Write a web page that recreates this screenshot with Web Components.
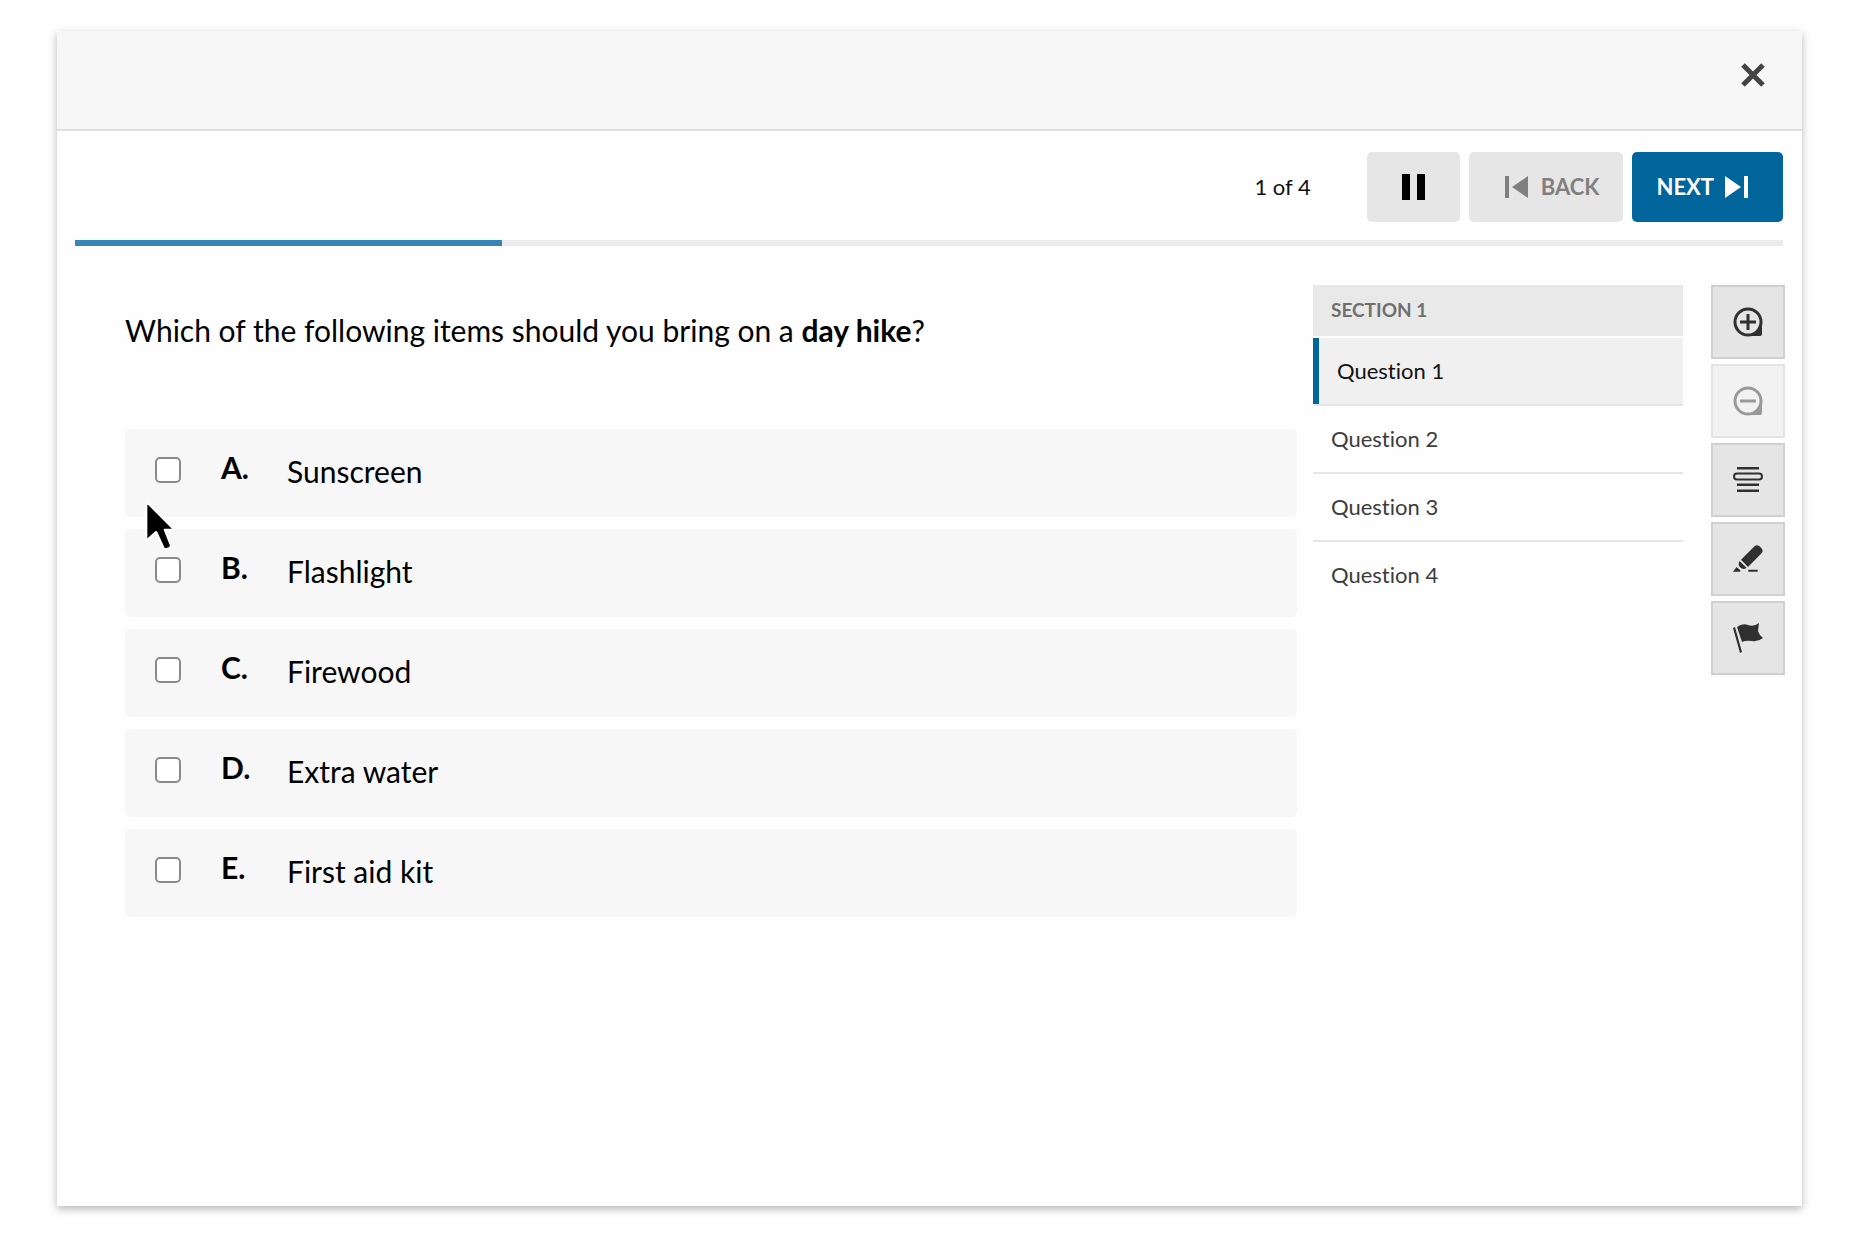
<!DOCTYPE html>
<html lang="en">
<head>
<meta charset="utf-8">
<meta name="viewport" content="width=device-width, initial-scale=1">
<title>Assessment</title>
<style>
  body {
    margin: 0;
    background: #fefefe;
    color: #111;
    font-family: Lato, "Liberation Sans", sans-serif;
    font-size: 22px;
    font-variant-ligatures: none;
  }
</style>
</head>
<body>
<quiz-window>
  <quiz-toolbar slot="toolbar" current="1" total="4"></quiz-toolbar>
  <quiz-progress slot="toolbar" value="1" max="4"></quiz-progress>
  <quiz-question slot="question">
    <span slot="prompt">Which of the following items should you bring on a <strong>day hike</strong>?</span>
    <quiz-option letter="A">Sunscreen</quiz-option>
    <quiz-option letter="B">Flashlight</quiz-option>
    <quiz-option letter="C">Firewood</quiz-option>
    <quiz-option letter="D">Extra water</quiz-option>
    <quiz-option letter="E">First aid kit</quiz-option>
  </quiz-question>
  <quiz-nav slot="nav" heading="Section 1">
    <quiz-nav-item current>Question 1</quiz-nav-item>
    <quiz-nav-item>Question 2</quiz-nav-item>
    <quiz-nav-item>Question 3</quiz-nav-item>
    <quiz-nav-item>Question 4</quiz-nav-item>
  </quiz-nav>
  <quiz-tools slot="tools"></quiz-tools>
  <mouse-pointer slot="overlay"></mouse-pointer>
</quiz-window>

<script>
// Attaches an open shadow root and fills it
function fill(element, html) {
  element.attachShadow({ mode: "open" }).innerHTML = html;
}

class QuizWindow extends HTMLElement {
  constructor() {
    super();
    fill(this, `
      <style>
        :host {
          display: block;
          position: relative;
          box-sizing: border-box;
          min-height: calc(100vh - 61px);
          margin: 31px 50px 30px 57px;
          background: #fefefe;
          box-shadow: 0 3px 8px rgba(0, 0, 0, 0.28);
        }
        header {
          display: flex;
          align-items: center;
          justify-content: flex-end;
          box-sizing: border-box;
          height: 100px;
          padding: 0 33px 10px;
          background: #f7f7f7;
          border-bottom: 2px solid #dedfe0;
        }
        header button {
          display: flex;
          padding: 4px;
          border: 0;
          background: none;
        }
        .body {
          display: grid;
          grid-template-columns: 1fr 398px 74px;
          align-items: start;
          padding: 39px 17px 39px 68px;
        }
        slot[name="question"]::slotted(*) { margin-right: 16px; }
        slot[name="nav"]::slotted(*) { margin-right: 28px; }
      </style>
      <header>
        <button type="button" aria-label="Close">
          <svg width="24" height="24" viewBox="0 0 24 24" stroke="#444" stroke-width="5">
            <path d="M2 2L22 22M22 2L2 22"/>
          </svg>
        </button>
      </header>
      <slot name="toolbar"></slot>
      <div class="body">
        <slot name="question"></slot>
        <slot name="nav"></slot>
        <slot name="tools"></slot>
      </div>
      <slot name="overlay"></slot>
    `);
  }
}

class QuizToolbar extends HTMLElement {
  constructor() {
    super();
    fill(this, `
      <style>
        :host {
          display: flex;
          align-items: center;
          justify-content: flex-end;
          gap: 9px;
          padding: 21px 19px 18px;
        }
        .count { margin-right: 47px; }
        span { padding-bottom: 2px; }
        button {
          display: flex;
          align-items: center;
          gap: 10px;
          height: 70px;
          padding: 0 24px;
          border: 0;
          border-radius: 5px;
          background: #e6e6e6;
          color: #000;
          font: 700 22px Lato, "Liberation Sans", sans-serif;
          text-transform: uppercase;
        }
        .pause { padding: 0 34px; }
        .back { padding-left: 36px; color: #808080; }
        .next { padding-right: 35px; background: #00659b; color: #fff; }
        svg { fill: currentColor; }
      </style>
      <span class="count">${this.getAttribute("current")} of ${this.getAttribute("total")}</span>
      <button type="button" class="pause" aria-label="Pause">
        <svg width="25" height="26" viewBox="0 0 25 26"><path d="M1 0h8v26H1zM16 0h8v26h-8z"/></svg>
      </button>
      <button type="button" class="back" disabled>
        <svg width="26" height="24" viewBox="0 0 26 24"><path d="M0 1h4v22H0zM23 1v22L7 12z"/></svg>
        <span>Back</span>
      </button>
      <button type="button" class="next">
        <span>Next</span>
        <svg width="24" height="24" viewBox="0 0 24 24"><path d="M20 1h4v22h-4zM1 1v22L17 12z"/></svg>
      </button>
    `);
  }
}

class QuizProgress extends HTMLElement {
  constructor() {
    super();
    const percent = this.getAttribute("value") / this.getAttribute("max") * 100;
    fill(this, `
      <style>
        :host {
          display: block;
          height: 6px;
          margin: 0 19px 0 18px;
          background: #ececed;
        }
        div {
          width: ${percent}%;
          height: 100%;
          background: #3586b6;
        }
      </style>
      <div></div>
    `);
  }
}

class QuizQuestion extends HTMLElement {
  constructor() {
    super();
    fill(this, `
      <style>
        :host {
          display: block;
          color: #000;
        }
        p {
          margin: 25px 0 79px;
          font-size: 30px;
          line-height: 40px;
        }
        .options {
          display: grid;
          gap: 12px;
        }
      </style>
      <p><slot name="prompt"></slot></p>
      <div class="options"><slot></slot></div>
    `);
  }
}

class QuizOption extends HTMLElement {
  constructor() {
    super();
    fill(this, `
      <style>
        :host { display: block; }
        label {
          display: grid;
          grid-template-columns: 26px 26px 1fr;
          column-gap: 40px;
          align-items: center;
          box-sizing: border-box;
          height: 88px;
          padding: 0 30px 6px;
          border-radius: 6px;
          background: #f7f7f8;
          font-size: 30px;
          line-height: 40px;
        }
        input {
          appearance: none;
          box-sizing: border-box;
          width: 26px;
          height: 26px;
          margin: 0;
          border: 2px solid #8a8a8a;
          border-radius: 5px;
          background: #fff;
        }
        input:checked { background: #00659b; }
        b { padding-bottom: 6px; }
        .text { padding-top: 2px; }
      </style>
      <label>
        <input type="checkbox">
        <b>${this.getAttribute("letter")}.</b>
        <span class="text"><slot></slot></span>
      </label>
    `);
  }
}

class QuizNav extends HTMLElement {
  constructor() {
    super();
    fill(this, `
      <style>
        :host { display: block; }
        h2 {
          margin: 0 0 2px;
          padding: 0 18px 2px;
          background: #e9e9e9;
          color: #707070;
          font-size: 19px;
          line-height: 49px;
          text-transform: uppercase;
        }
      </style>
      <nav>
        <h2>${this.getAttribute("heading")}</h2>
        <slot></slot>
      </nav>
    `);
  }
}

class QuizNavItem extends HTMLElement {
  constructor() {
    super();
    fill(this, `
      <style>
        :host {
          display: block;
          border-bottom: 2px solid #e6e6ea;
        }
        :host(:last-of-type) { border-bottom: 0; }
        a {
          display: block;
          padding: 0 18px 1px;
          color: #3c3c3c;
          line-height: 65px;
          text-decoration: none;
        }
        :host([current]) a {
          border-left: 6px solid #00659b;
          background: #f0f0f1;
          color: #111;
        }
      </style>
      <a href="#"><slot></slot></a>
    `);
  }
}

class QuizTools extends HTMLElement {
  constructor() {
    super();
    fill(this, `
      <style>
        :host {
          display: grid;
          gap: 5px;
        }
        button {
          display: grid;
          place-items: center;
          box-sizing: border-box;
          height: 74px;
          padding: 0;
          border: 2px solid #cfd0d2;
          background: #e5e5e5;
          color: #303030;
        }
        button:disabled {
          border-color: #e3e4e8;
          background: #f2f2f3;
          color: #999;
        }
        svg {
          width: 30px;
          height: 30px;
          fill: currentColor;
        }
        .line { fill: none; stroke: currentColor; stroke-width: 3; }
      </style>
      <button type="button" aria-label="Zoom in">
        <svg viewBox="0 0 30 30">
          <path d="M29 15v12a2 2 0 0 1-2 2H15z"/>
          <circle cx="15" cy="15" r="13" fill="#e5e5e5"/>
          <path class="line" d="M15 2a13 13 0 1 0 0 26a13 13 0 1 0 0-26zM7 15h16M15 7v16"/>
        </svg>
      </button>
      <button type="button" aria-label="Zoom out" disabled>
        <svg viewBox="0 0 30 30">
          <path d="M29 15v12a2 2 0 0 1-2 2H15z"/>
          <circle cx="15" cy="15" r="13" fill="#f2f2f3"/>
          <path class="line" d="M15 2a13 13 0 1 0 0 26a13 13 0 1 0 0-26zM7 15h16"/>
        </svg>
      </button>
      <button type="button" aria-label="Line reader">
        <svg viewBox="0 0 30 30">
          <path d="M4 2h22v2.500H4zM4 18.500h22v2.500H4zM4 24.500h22v2.500H4z"/>
          <rect x="1" y="8.500" width="28" height="6" rx="3" fill="none" stroke="currentColor" stroke-width="2"/>
        </svg>
      </button>
      <button type="button" aria-label="Highlighter">
        <svg viewBox="0 0 30 30">
          <path d="M21.500 2.300q2.500-2 5 0l2 2q2.200 2.500 0 5L15 23l-7-7.300zM6.500 17l7 6.800q-1.500 1.400-3.200 1.200q-2-.5-3.800-2.200q-1.600-2.800 0-5.800zM3.500 23l3.800 3.300v1.500H0zM15.300 25.700h9.400v2.100h-9.400z"/>
        </svg>
      </button>
      <button type="button" aria-label="Flag question">
        <svg viewBox="0 0 30 30">
          <path d="M0 5l2-1 7 25-2 1zM4 4q5-4 11-2q6 2 11-2l-1 8q1 4 5 7q-5 4-11 3q-6-1-10 1z"/>
        </svg>
      </button>
    `);
  }
}

class MousePointer extends HTMLElement {
  constructor() {
    super();
    fill(this, `
      <style>
        :host {
          position: absolute;
          left: 85px;
          top: 465px;
          pointer-events: none;
        }
        svg { display: block; }
      </style>
      <svg width="38" height="59" viewBox="0 0 34 54">
        <path d="M3.500 5v36l9-8 7 15q4 2 7-2l-6-15h9z" fill="#000" stroke="#fff" stroke-width="2" stroke-linejoin="round"/>
      </svg>
    `);
  }
}

customElements.define("quiz-window", QuizWindow);
customElements.define("quiz-toolbar", QuizToolbar);
customElements.define("quiz-progress", QuizProgress);
customElements.define("quiz-question", QuizQuestion);
customElements.define("quiz-option", QuizOption);
customElements.define("quiz-nav", QuizNav);
customElements.define("quiz-nav-item", QuizNavItem);
customElements.define("quiz-tools", QuizTools);
customElements.define("mouse-pointer", MousePointer);
</script>
</body>
</html>
